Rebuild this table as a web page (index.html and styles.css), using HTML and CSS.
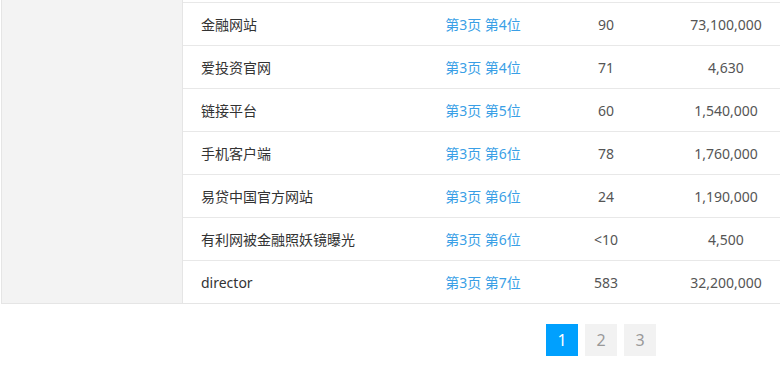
FILE: index.html
```html
<!DOCTYPE html>
<html lang="zh-CN">
<head>
<meta charset="utf-8">
<title>关键词排名</title>
<link rel="stylesheet" href="styles.css">
</head>
<body>
<div class="page">
  <div class="wrap">
    <div class="side"></div>
    <div class="rows">
      <div class="row"><span class="c-name">金融网站</span><span class="c-rank">第3页 第4位</span><span class="c-num">90</span><span class="c-total">73,100,000</span></div>
      <div class="row"><span class="c-name">爱投资官网</span><span class="c-rank">第3页 第4位</span><span class="c-num">71</span><span class="c-total">4,630</span></div>
      <div class="row"><span class="c-name">链接平台</span><span class="c-rank">第3页 第5位</span><span class="c-num">60</span><span class="c-total">1,540,000</span></div>
      <div class="row"><span class="c-name">手机客户端</span><span class="c-rank">第3页 第6位</span><span class="c-num">78</span><span class="c-total">1,760,000</span></div>
      <div class="row"><span class="c-name">易贷中国官方网站</span><span class="c-rank">第3页 第6位</span><span class="c-num">24</span><span class="c-total">1,190,000</span></div>
      <div class="row"><span class="c-name">有利网被金融照妖镜曝光</span><span class="c-rank">第3页 第6位</span><span class="c-num">&lt;10</span><span class="c-total">4,500</span></div>
      <div class="row"><span class="c-name">director</span><span class="c-rank">第3页 第7位</span><span class="c-num">583</span><span class="c-total">32,200,000</span></div>
    </div>
  </div>
  <div class="pager">
    <a class="pg active">1</a>
    <a class="pg">2</a>
    <a class="pg">3</a>
  </div>
</div>
</body>
</html>
```
FILE: styles.css
```css
html, body {
  margin: 0;
  padding: 0;
  background: #fff;
  overflow: hidden;
}
body {
  font-family: "Noto Sans", "Noto Sans CJK SC", sans-serif;
  font-size: 14px;
  color: #333;
}
.page {
  width: 800px;
  padding-left: 1px;
}
.wrap {
  display: flex;
  border-left: 1px solid #e5e5e5;
  border-bottom: 1px solid #e5e5e5;
}
.side {
  width: 180px;
  flex: none;
  background: #f3f3f3;
  border-right: 1px solid #e5e5e5;
}
.rows {
  flex: 1;
  padding-top: 2px;
}
.row {
  display: flex;
  align-items: center;
  height: 42px;
  border-top: 1px solid #e8e8e8;
}
.row:first-child {
  border-top-color: #e8e8e8;
}
.c-name {
  width: 222px;
  padding-left: 18px;
  color: #333;
}
.c-rank {
  width: 120px;
  text-align: center;
  color: #3a9fe6;
}
.c-num {
  width: 126px;
  text-align: center;
  color: #555;
}
.c-total {
  width: 114px;
  text-align: center;
  color: #555;
}
.pager {
  display: flex;
  gap: 7px;
  padding: 20px 0 0 545px;
}
.pg {
  width: 32px;
  height: 32px;
  display: flex;
  align-items: center;
  justify-content: center;
  background: #f2f2f2;
  color: #999;
  font-size: 16px;
}
.pg.active {
  background: #00a0fe;
  color: #fff;
}
```
